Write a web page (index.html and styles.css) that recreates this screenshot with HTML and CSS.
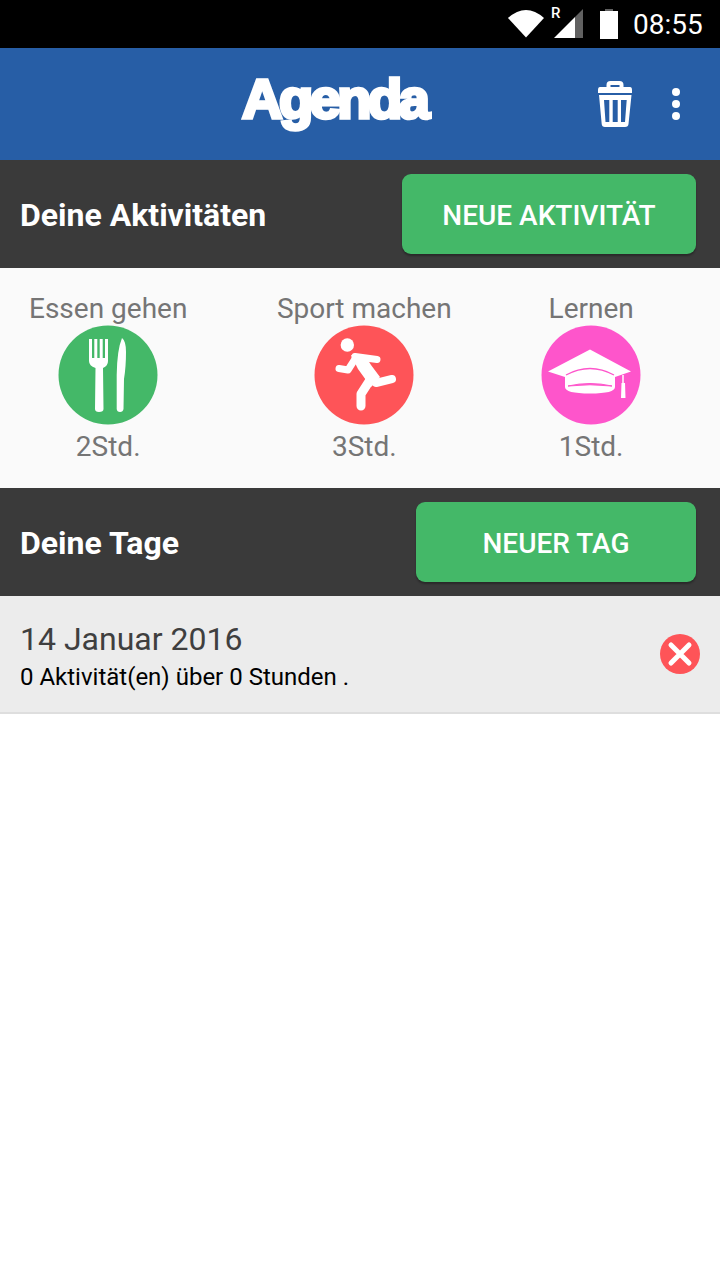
FILE: index.html
```html
<!DOCTYPE html>
<html lang="de">

<head>
    <meta charset="UTF-8">
    <meta name="viewport" content="width=device-width, initial-scale=1.0">
    <title>Agenda</title>
    <link rel="stylesheet" href="styles.css">
</head>

<body>
    <div class="statusbar">
        <svg class="wifi" width="36" height="28" viewBox="0 0 36 28">
            <path d="M0 8Q18 -8 36 8L18 27.500Z" fill="#fff" />
        </svg>
        <span class="roam">R</span>
        <svg class="signal" width="29" height="29" viewBox="0 0 29 29">
            <path d="M0 29L21 8V29Z" fill="#fff" />
            <path d="M21 8L29 0V29H21Z" fill="#616161" />
        </svg>
        <svg class="battery" width="20" height="30" viewBox="0 0 20 30">
            <path d="M6 0H14V2H6Z" fill="#616161" />
            <path d="M1 2H19V30H1Z" fill="#fff" />
        </svg>
        <span class="time">08:55</span>
    </div>

    <header class="appbar">
        <h1 class="logo">Agenda</h1>
        <svg class="trash" width="36" height="46" viewBox="0 0 36 46">
            <path d="M10.500 7V4Q10.500 2 12.500 2H21.500Q23.500 2 23.500 4V7" fill="none" stroke="#fff" stroke-width="4" />
            <path d="M2 6H32Q34 6 34 9V12H0V9Q0 6 2 6Z" fill="#fff" />
            <path fill-rule="evenodd" d="M1 14H33.500L30.500 43Q30.300 46 27 46H7Q3.900 46 3.700 43ZM6 19L7.500 41H11.300V19ZM14.700 19V41H19.700V19ZM23 19V41H27L28.700 19Z" fill="#fff" />
        </svg>
        <div class="dots"><i></i><i></i><i></i></div>
    </header>

    <section class="bar">
        <h2>Deine Aktivitäten</h2>
        <a class="btn btn-activity">NEUE AKTIVITÄT</a>
    </section>

    <div class="activities">
        <div class="activity">
            <span class="label">Essen gehen</span>
            <svg class="circle" width="100" height="100" viewBox="0 0 100 100">
                <circle cx="50" cy="50" r="49.500" fill="#44b868" />
                <path d="M31 14H34V33H36.300V14H39.300V33H41.700V14H44.700V33H47V14H50V36Q50 41 45 43L45.500 84Q45.500 87 41 87Q37 87 37 84L37.500 43Q31 41 31 36Z" fill="#fff" />
                <path d="M64 13Q68 16 68 27Q68 42 66 54L65.500 84Q65 87 62 87Q59 87 58.700 84L58.700 50Q59 25 64 13Z" fill="#fff" />
            </svg>
            <span class="label">2Std.</span>
        </div>
        <div class="activity">
            <span class="label">Sport machen</span>
            <svg class="circle" width="100" height="100" viewBox="0 0 100 100">
                <circle cx="50" cy="50" r="49.500" fill="#fe5458" />
                <circle cx="33.300" cy="20" r="6.700" fill="#fff" />
                <path d="M41 31.500L63 34.500" fill="none" stroke="#fff" stroke-width="7" stroke-linecap="round" />
                <path d="M25 43.500L34 45L41 34" fill="none" stroke="#fff" stroke-width="7" stroke-linecap="round" stroke-linejoin="round" />
                <path d="M37 30L52 32L57 40L66 52L57 62L44 44L40 36Z" fill="#fff" />
                <path d="M58 55L62 58L78 54" fill="none" stroke="#fff" stroke-width="8" stroke-linecap="round" stroke-linejoin="round" />
                <path d="M56 55L47 69L47 81" fill="none" stroke="#fff" stroke-width="9" stroke-linecap="round" stroke-linejoin="round" />
            </svg>
            <span class="label">3Std.</span>
        </div>
        <div class="activity">
            <span class="label">Lernen</span>
            <svg class="circle" width="100" height="100" viewBox="0 0 100 100">
                <circle cx="50" cy="50" r="49.500" fill="#fe55cb" />
                <path d="M49 24.500L90 46.500L74 52V62Q74 68.500 49 68.500Q24 68.500 24 62V52L7 46.500Z" fill="#fff" />
                <path d="M25 50Q49 37 73 50" fill="none" stroke="#fe55cb" stroke-width="1.300" />
                <path d="M27 61Q49 56 71 61Q49 58.500 27 61Z" fill="#fe55cb" stroke="#fe55cb" />
                <path d="M82 50V60" stroke="#fff" stroke-width="1.500" />
                <path d="M80.500 58H84L84.500 73H80Z" fill="#fff" />
            </svg>
            <span class="label">1Std.</span>
        </div>
    </div>

    <section class="bar">
        <h2>Deine Tage</h2>
        <a class="btn btn-day">NEUER TAG</a>
    </section>

    <div class="day">
        <div class="day-text">
            <div class="day-date">14 Januar 2016</div>
            <div class="day-info">0 Aktivität(en) über 0 Stunden .</div>
        </div>
        <svg class="remove" width="40" height="40" viewBox="0 0 40 40">
            <circle cx="20" cy="20" r="20" fill="#fe5458" />
            <path d="M11 11L29 29M29 11L11 29" stroke="#fff" stroke-width="5" stroke-linecap="round" />
        </svg>
    </div>
</body>

</html>
```

FILE: styles.css
```css
html,
body,
h1,
h2 {
    margin: 0;
    padding: 0;
    font-weight: normal;
}

body {
    background: #fff;
    font-family: Roboto, sans-serif;
}

.statusbar {
    height: 48px;
    background: #000;
    display: flex;
    align-items: center;
    justify-content: flex-end;
    padding-right: 16px;
    color: #fff;
}
.wifi{margin-right: 7px;margin-top: -1px;}
.roam{font-size: 15px;font-weight: 500;width: 11px;margin-top: -22px;}
.signal{margin-left: -8px;margin-top: -1px;}
.battery{margin-left: 16px;margin-top: -1px;}
.time{font-size: 28px;margin-left: 14px;width: 71px;}

.appbar {
    height: 112px;
    background: #275ea6;
    display: flex;
    align-items: center;
    position: relative;
}
.logo {
    position: absolute;
    left: 242px;
    top: 16px;
    color: #fff;
    font-family: "Liberation Sans", sans-serif;
    font-weight: bold;
    font-size: 56px;
    line-height: 70px;
    letter-spacing: -3.500px;
    -webkit-text-stroke: 3.500px #fff;
}
.trash{margin-left: 598px;}
.dots{margin-left: 38px;display: flex;flex-direction: column;gap: 4px;}
.dots i{display: block;width: 8px;height: 8px;border-radius: 50%;background: #fff;}

.bar {
    height: 108px;
    background: #3a3a3a;
    display: flex;
    align-items: center;
    justify-content: space-between;
    padding: 0 24px 0 20px;
    box-sizing: border-box;
}
.bar h2{color: #fff;font-size: 32px;font-weight: 700;margin-top: 2px;}
.btn {
    height: 80px;
    line-height: 83px;
    margin-top: -1px;
    border-radius: 9px;
    background: #44b868;
    box-shadow: 0 2px 2px rgba(0, 0, 0, .3);
    color: #fff;
    font-size: 28px;
    font-weight: 500;
    text-align: center;
}
.btn-activity{width: 294px;}
.btn-day{width: 280px;}

.activities {
    height: 220px;
    box-sizing: border-box;
    background: #fafafa;
    display: flex;
    gap: 89.500px;
    padding: 24px 0 0 29px;
}
.activity {
    display: flex;
    flex-direction: column;
    align-items: center;
}
.label{font-size: 28px;line-height: 34px;color: #757575;}
.circle{display: block;margin: -1px 0 5px;}

.day {
    height: 118px;
    box-sizing: border-box;
    background: #ececec;
    border-bottom: 2px solid #dedede;
    display: flex;
    align-items: center;
    justify-content: space-between;
    padding: 0 20px;
}
.day-text{padding-top: 3px;}
.day-date{font-size: 32px;line-height: 42px;color: #3f3f3f;}
.day-info{font-size: 24px;line-height: 32px;margin-top: 1px;color: #000;}
```
